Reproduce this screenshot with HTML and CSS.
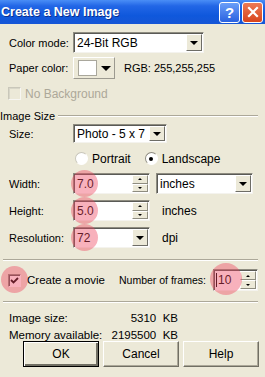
FILE: index.html
```html
<!DOCTYPE html>
<html lang="en">
<head>
    <meta charset="UTF-8">
    <meta name="viewport" content="width=device-width, initial-scale=1.0">
    <title>Create a New Image</title>
    <link rel="stylesheet" href="styles.css">
</head>
<body>

<div class="dialog">
    <!-- Window title bar -->
    <div class="titlebar">
        <span class="title">Create a New Image</span>
        <div class="title-btns">
            <span class="tbtn help">?</span>
            <span class="tbtn close">
                <svg width="12" height="12" viewBox="0 0 12 12"><path d="M2 2 L10 10 M10 2 L2 10" stroke="#fff" stroke-width="2.2" stroke-linecap="square"/></svg>
            </span>
        </div>
    </div>

    <div class="row row-color">
        <span class="label">Color mode:</span>
        <div class="combo combo-mode"><span class="combo-text">24-Bit RGB</span><span class="drop"><span class="tri"></span></span></div>
    </div>

    <div class="row row-paper">
        <span class="label">Paper color:</span>
        <div class="swatch-btn"><span class="swatch"></span><span class="tri"></span></div>
        <span class="rgb">RGB: 255,255,255</span>
    </div>

    <div class="row row-nobg">
        <span class="check disabled"></span>
        <span class="gray">No Background</span>
    </div>

    <div class="group-title"><span>Image Size</span><span class="group-line"></span></div>

    <div class="row row-size">
        <span class="label">Size:</span>
        <div class="combo combo-size"><span class="combo-text">Photo - 5 x 7</span><span class="drop"><span class="tri"></span></span></div>
    </div>

    <div class="row row-orient">
        <span class="radio"></span><span class="radio-text">Portrait</span>
        <span class="radio checked"></span><span class="radio-text">Landscape</span>
    </div>

    <div class="row row-width">
        <span class="label">Width:</span>
        <div class="field spin-field">
            <span class="field-text">7.0</span>
            <span class="spinner"><span class="spin-up"></span><span class="spin-down"></span></span>
            <span class="mark mark-field"></span>
        </div>
        <div class="combo combo-unit"><span class="combo-text">inches</span><span class="drop"><span class="tri"></span></span></div>
    </div>

    <div class="row row-height">
        <span class="label">Height:</span>
        <div class="field spin-field">
            <span class="field-text">5.0</span>
            <span class="spinner"><span class="spin-up"></span><span class="spin-down"></span></span>
            <span class="mark mark-field"></span>
        </div>
        <span class="unit">inches</span>
    </div>

    <div class="row row-res">
        <span class="label">Resolution:</span>
        <div class="combo combo-res">
            <span class="combo-text">72</span><span class="drop"><span class="tri"></span></span>
            <span class="mark mark-field"></span>
        </div>
        <span class="unit">dpi</span>
    </div>

    <div class="sep sep-top"></div>

    <div class="row row-movie">
        <div class="check-wrap">
            <span class="check checked">
                <svg width="9" height="9" viewBox="0 0 9 9"><path d="M1 4 L3.5 6.5 L8 2" fill="none" stroke="#000" stroke-width="1.8"/></svg>
            </span>
            <span class="mark mark-check"></span>
        </div>
        <span class="movie-text">Create a movie</span>
        <span class="frames-label">Number of frames:</span>
        <div class="field frames-field">
            <span class="field-text"><span class="caret"></span>10</span>
            <span class="spinner"><span class="spin-up"></span><span class="spin-down"></span></span>
            <span class="mark mark-frames"></span>
        </div>
    </div>

    <div class="sep sep-bottom"></div>

    <div class="info info-first">
        <span class="info-label">Image size:</span>
        <span class="info-val">5310  KB</span>
    </div>
    <div class="info">
        <span class="info-label">Memory available:</span>
        <span class="info-val">2195500  KB</span>
    </div>

    <div class="buttons">
        <button type="button" class="btn btn-default">OK</button>
        <button type="button" class="btn">Cancel</button>
        <button type="button" class="btn">Help</button>
    </div>
</div>

</body>
</html>
```

FILE: styles.css
```css
/* Classic dialog look */
body {
    margin: 0;
    padding: 0;
    background-color: #ECE9D8;
    font-family: "Liberation Sans", Arial, sans-serif;
    font-size: 11px;
    color: #000;
}

.dialog {
    width: 265px;
    height: 377px;
    overflow: hidden;
    white-space: nowrap;
}

/* Title bar */
.titlebar {
    height: 24px;
    display: flex;
    align-items: center;
    justify-content: space-between;
    padding: 0 2px 0 1px;
    background: linear-gradient(to bottom, #4A8EF6 0%, #2266E6 25%, #0F58DC 65%, #1656D6 100%);
}

.title {
    color: #fff;
    font-weight: bold;
    font-size: 12.5px;
    text-shadow: 1px 1px 0 #0A2F8C;
}

.title-btns {
    display: flex;
    gap: 2px;
}

.tbtn {
    width: 19px;
    height: 19px;
    border: 1px solid #fff;
    border-radius: 3px;
    display: flex;
    align-items: center;
    justify-content: center;
    color: #fff;
    font-weight: bold;
    font-size: 15px;
}

.help {
    background: linear-gradient(to bottom, #6A9EF8, #2A62E0);
}

.close {
    background: linear-gradient(to bottom, #EC7A55, #D8441C);
}

/* Generic rows */
.row {
    display: flex;
    align-items: center;
    padding-left: 9px;
}

.label {
    width: 64px;
    flex: none;
}

.row-color { margin-top: 8px; height: 21px; }
.row-paper { margin-top: 4px; height: 22px; }
.row-nobg { margin-top: 8px; height: 13px; padding-left: 8px; }
.row-size { margin-top: 2px; height: 19px; }
.row-orient { margin-top: 9px; height: 13px; padding-left: 75px; }
.row-width { margin-top: 8px; height: 21px; }
.row-height { margin-top: 6px; height: 21px; }
.row-res { margin-top: 6px; height: 21px; }
.row-movie { margin-top: 8px; height: 22px; padding-left: 8px; }

/* Sunken fields and combos */
.combo, .field {
    position: relative;
    height: 100%;
    box-sizing: border-box;
    background-color: #fff;
    border: 1px solid;
    border-color: #8E8C80 #F4F3EE #F4F3EE #8E8C80;
    box-shadow: inset 1px 1px 0 #5A5A56;
    display: flex;
    align-items: center;
    flex: none;
}

.combo-text, .field-text {
    flex: 1;
    padding-left: 3px;
    font-size: 12px;
}

.drop {
    width: 16px;
    height: calc(100% - 2px);
    margin-right: 1px;
    box-sizing: border-box;
    background-color: #ECE9D8;
    border: 1px solid;
    border-color: #FFFFFF #6E6D66 #6E6D66 #FFFFFF;
    display: flex;
    align-items: center;
    justify-content: center;
}

.tri {
    width: 0;
    height: 0;
    border-left: 4px solid transparent;
    border-right: 4px solid transparent;
    border-top: 4px solid #000;
}

.combo-mode { width: 131px; }
.combo-size { width: 94px; }
.combo-unit { width: 97px; margin-left: 6px; }
.combo-res { width: 77px; }

/* Paper colour picker */
.swatch-btn {
    width: 42px;
    height: 22px;
    box-sizing: border-box;
    border: 1px solid;
    border-color: #FFFFFF #9C9A90 #9C9A90 #FFFFFF;
    display: flex;
    align-items: center;
    padding-left: 4px;
    gap: 4px;
}

.swatch {
    width: 19px;
    height: 16px;
    box-sizing: border-box;
    background-color: #fff;
    border: 1px solid #A9A79C;
}

.swatch-btn .tri {
    border-left-width: 5px;
    border-right-width: 5px;
    border-top-width: 5px;
}

.rgb {
    margin-left: 9px;
}

/* Checkboxes and radios */
.check {
    width: 13px;
    height: 13px;
    box-sizing: border-box;
    border: 1px solid;
    border-color: #8E8C80 #FFFFFF #FFFFFF #8E8C80;
    box-shadow: inset 1px 1px 0 #5A5A56;
    background-color: #fff;
    display: flex;
    align-items: center;
    justify-content: center;
    flex: none;
}

.check.disabled {
    background-color: #ECE9D8;
    border-color: #C9C7BA #F7F6F2 #F7F6F2 #C9C7BA;
    box-shadow: inset 1px 1px 0 #D8D6C8;
}

.gray {
    color: #ACA899;
    margin-left: 4px;
    font-size: 12px;
}

.group-title {
    margin-top: 9px;
    height: 13px;
    display: flex;
    align-items: center;
}

.group-line {
    flex: 1;
    margin: 0 7px 0 3px;
    height: 1px;
    background-color: #ACA899;
    border-bottom: 1px solid #fff;
}

.radio {
    width: 13px;
    height: 13px;
    box-sizing: border-box;
    border-radius: 50%;
    background-color: #fff;
    border: 1px solid;
    border-color: #C8C6BA #FFFFFF #FFFFFF #C8C6BA;
    display: flex;
    align-items: center;
    justify-content: center;
}

.radio.checked {
    margin-left: 14px;
    border-color: #8E8C80 #FFFFFF #FFFFFF #8E8C80;
}

.radio.checked::after {
    content: "";
    width: 4px;
    height: 4px;
    border-radius: 50%;
    background-color: #000;
}

.radio-text {
    margin-left: 4px;
    font-size: 12px;
}

/* Spinner fields */
.spin-field {
    width: 77px;
}

.spinner {
    width: 16px;
    height: calc(100% - 2px);
    margin-right: 1px;
    display: flex;
    flex-direction: column;
}

.spin-up, .spin-down {
    flex: 1;
    background-color: #ECE9D8;
    border: 1px solid;
    border-color: #FFFFFF #8E8C80 #8E8C80 #FFFFFF;
    display: flex;
    align-items: center;
    justify-content: center;
}

.spin-up::after, .spin-down::after {
    content: "";
    border-left: 2px solid transparent;
    border-right: 2px solid transparent;
}

.spin-up::after { border-bottom: 2px solid #000; }
.spin-down::after { border-top: 2px solid #000; }

.unit {
    margin-left: 12px;
    font-size: 12px;
}

/* Separators */
.sep {
    margin: 0 7px 0 3px;
    height: 1px;
    background-color: #ACA899;
    border-bottom: 1px solid #fff;
}

.sep-top { margin-top: 11px; }
.sep-bottom { margin-top: 10px; }

/* Movie row */
.check-wrap {
    position: relative;
    flex: none;
}

.movie-text {
    margin-left: 6px;
    width: 92px;
    flex: none;
    font-size: 11.5px;
}

.frames-label {
    width: 94px;
    flex: none;
    font-size: 10.5px;
}

.frames-field {
    width: 45px;
}

.frames-field .field-text {
    padding-left: 2px;
    display: flex;
    align-items: center;
}

.caret {
    width: 1px;
    height: 14px;
    background-color: #000;
    margin-right: 1px;
}

/* Pink highlight marks */
.mark {
    position: absolute;
    border-radius: 50%;
    background-color: rgba(238, 70, 95, 0.42);
    pointer-events: none;
}

.mark-field {
    left: -3px;
    top: -4px;
    width: 27px;
    height: 27px;
}

.mark-check {
    left: -7px;
    top: -8px;
    width: 27px;
    height: 27px;
}

.mark-frames {
    left: -4px;
    top: -7px;
    width: 32px;
    height: 32px;
}

/* Info lines */
.info {
    display: flex;
    padding-left: 9px;
    height: 13px;
    align-items: center;
    margin-top: 4px;
    font-size: 11.5px;
}

.info-first {
    margin-top: 8px;
}

.info-label {
    width: 100px;
    flex: none;
}

.info-val {
    width: 69px;
    flex: none;
    text-align: right;
    white-space: pre;
}

/* Buttons */
.buttons {
    display: flex;
    gap: 4px;
    padding-left: 23px;
    margin-top: 0;
}

.btn {
    width: 76px;
    height: 26px;
    font-family: "Liberation Sans", Arial, sans-serif;
    font-size: 12px;
    color: #000;
    background-color: #ECE9D8;
    border: 1px solid;
    border-color: #FFFFFF #716F64 #716F64 #FFFFFF;
    box-shadow: inset -1px -1px 0 #ACA899;
    padding: 0;
}

.btn-default {
    outline: 1px solid #000;
    outline-offset: -1px;
    box-shadow: inset 1px 1px 0 #fff, inset -2px -2px 0 #716F64;
}
```
